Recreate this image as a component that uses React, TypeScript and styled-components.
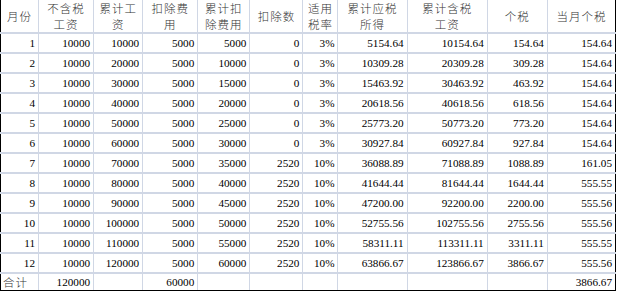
import React from 'react'
import styled, { createGlobalStyle } from 'styled-components'

const GlobalStyle = createGlobalStyle`
  html, body {
    margin: 0;
    padding: 0;
    background: #ffffff;
  }
`

const GRID = '#d0d7e5'

const Sheet = styled.table`
  border-collapse: collapse;
  table-layout: fixed;
  width: 616px;
  border-left: 1px solid #000;
  border-right: 1px solid #000;
  border-bottom: 2px solid #000;
  font-family: "Liberation Serif", "Noto Sans CJK SC", serif;
  font-size: 11.2px;
  color: #000;
`

const HeadCell = styled.th`
  height: 30px;
  padding: 0;
  border-right: 1px solid ${GRID};
  border-bottom: 2px solid ${GRID};
  font-family: "Noto Sans CJK SC", sans-serif;
  font-weight: 300;
  font-size: 11.5px;
  line-height: 16px;
  letter-spacing: 1px;
  text-align: center;
  vertical-align: middle;
  color: #333;
  &:last-child {
    border-right: none;
  }
`

const Cell = styled.td<{ $left?: boolean }>`
  height: 18px;
  padding: 0 3px 0 2px;
  border-right: 1px solid ${GRID};
  border-bottom: 2px solid ${GRID};
  text-align: ${(p) => (p.$left ? 'left' : 'right')};
  vertical-align: middle;
  white-space: nowrap;
  overflow: hidden;
  &:last-child {
    border-right: none;
  }
`

const TotalRow = styled.tr`
  td {
    height: 16px;
    border-bottom: none;
  }
`

const CjkLabel = styled.span`
  font-family: "Noto Sans CJK SC", sans-serif;
  font-weight: 300;
  font-size: 11.5px;
  letter-spacing: 1px;
  color: #333;
`

const widths = [38, 55, 49, 55, 52, 53, 35, 69, 80, 60, 68]

const headers = [
  ['月份'],
  ['不含税', '工资'],
  ['累计工', '资'],
  ['扣除费', '用'],
  ['累计扣', '除费用'],
  ['扣除数'],
  ['适用', '税率'],
  ['累计应税', '所得'],
  ['累计含税', '工资'],
  ['个税'],
  ['当月个税'],
]

const rows = [
  ['1', '10000', '10000', '5000', '5000', '0', '3%', '5154.64', '10154.64', '154.64', '154.64'],
  ['2', '10000', '20000', '5000', '10000', '0', '3%', '10309.28', '20309.28', '309.28', '154.64'],
  ['3', '10000', '30000', '5000', '15000', '0', '3%', '15463.92', '30463.92', '463.92', '154.64'],
  ['4', '10000', '40000', '5000', '20000', '0', '3%', '20618.56', '40618.56', '618.56', '154.64'],
  ['5', '10000', '50000', '5000', '25000', '0', '3%', '25773.20', '50773.20', '773.20', '154.64'],
  ['6', '10000', '60000', '5000', '30000', '0', '3%', '30927.84', '60927.84', '927.84', '154.64'],
  ['7', '10000', '70000', '5000', '35000', '2520', '10%', '36088.89', '71088.89', '1088.89', '161.05'],
  ['8', '10000', '80000', '5000', '40000', '2520', '10%', '41644.44', '81644.44', '1644.44', '555.55'],
  ['9', '10000', '90000', '5000', '45000', '2520', '10%', '47200.00', '92200.00', '2200.00', '555.56'],
  ['10', '10000', '100000', '5000', '50000', '2520', '10%', '52755.56', '102755.56', '2755.56', '555.56'],
  ['11', '10000', '110000', '5000', '55000', '2520', '10%', '58311.11', '113311.11', '3311.11', '555.55'],
  ['12', '10000', '120000', '5000', '60000', '2520', '10%', '63866.67', '123866.67', '3866.67', '555.56'],
]

const totals = ['120000', '', '60000', '', '', '', '', '', '', '3866.67']

export default function App() {
  return (
    <>
      <GlobalStyle />
      <Sheet>
        <colgroup>
          {widths.map((w, i) => (
            <col key={i} style={{ width: w }} />
          ))}
        </colgroup>
        <thead>
          <tr>
            {headers.map((lines, i) => (
              <HeadCell key={i}>
                {lines.map((l, j) => (
                  <div key={j}>{l}</div>
                ))}
              </HeadCell>
            ))}
          </tr>
        </thead>
        <tbody>
          {rows.map((r, i) => (
            <tr key={i}>
              {r.map((v, j) => (
                <Cell key={j}>{v}</Cell>
              ))}
            </tr>
          ))}
          <TotalRow>
            <Cell $left>
              <CjkLabel>合计</CjkLabel>
            </Cell>
            {totals.map((v, j) => (
              <Cell key={j}>{v}</Cell>
            ))}
          </TotalRow>
        </tbody>
      </Sheet>
    </>
  )
}
